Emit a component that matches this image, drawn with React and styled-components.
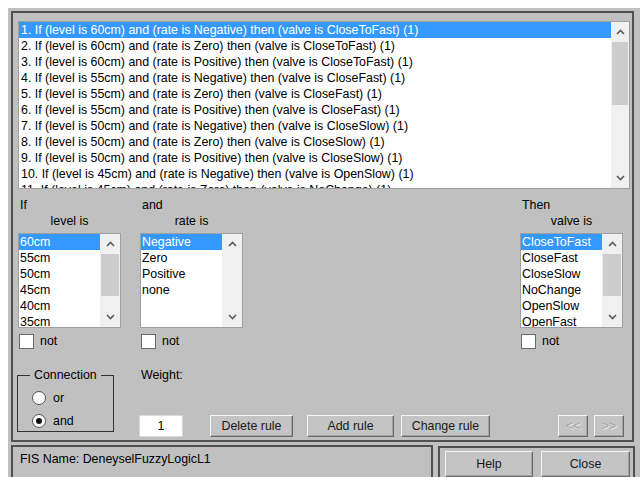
import React from 'react';
import styled, { createGlobalStyle } from 'styled-components';

const GlobalStyle = createGlobalStyle`
  body {
    margin: 0;
    background: #fff;
    font-family: "Liberation Sans", Arial, sans-serif;
    font-size: 12.4px;
    color: #000;
  }
`;

const Window = styled.div`
  margin: 8px 0 0 8px;
  width: 632px;
  height: 469px;
  padding: 3px 0 0 3px;
  box-sizing: border-box;
  background: #c0c0c0;
  overflow: hidden;
  display: flex;
  flex-direction: column;
  gap: 3px;
`;

const Frame = styled.div`
  box-sizing: border-box;
  flex-shrink: 0;
  width: 623px;
  height: 431px;
  border: 2px solid #505050;
  padding: 8px 2px 0 5px;
  display: flex;
  flex-direction: column;
`;

const ListFrame = styled.div`
  box-sizing: border-box;
  flex-shrink: 0;
  width: ${(p) => p.$w}px;
  height: ${(p) => p.$h}px;
  border: 1px solid #a0a0a0;
  background: #fff;
  display: flex;
  overflow: hidden;
`;

const Rows = styled.div`
  flex: 1;
  min-width: 0;
  overflow: hidden;
`;

const Row = styled.div`
  height: 16px;
  line-height: 17px;
  padding-left: ${(p) => p.$pad}px;
  white-space: nowrap;
  background: ${(p) => (p.$sel ? '#3399ff' : 'transparent')};
  color: ${(p) => (p.$sel ? '#fff' : '#000')};
`;

const ScrollBar = styled.div`
  width: ${(p) => p.$w}px;
  flex-shrink: 0;
  background: #f0f0f0;
  display: flex;
  flex-direction: column;
`;

const ArrowBox = styled.div`
  height: 20px;
  flex-shrink: 0;
  display: flex;
  align-items: center;
  justify-content: center;
`;

const Track = styled.div`
  flex: 1;
  display: flex;
  flex-direction: column;
`;

const Thumb = styled.div`
  background: #cdcdcd;
  margin: 0 1px;
`;

const Chevron = ({ down }) => (
  <svg width="9" height="6" viewBox="0 0 9 6">
    <polyline
      points={down ? '1,1 4.5,4.5 8,1' : '1,5 4.5,1.5 8,5'}
      fill="none"
      stroke="#5a5a5a"
      strokeWidth="1.6"
    />
  </svg>
);

const ListBox = ({ items, selected = 0, w, h, sbw, thumb, pad = 2 }) => (
  <ListFrame $w={w} $h={h}>
    <Rows>
      {items.map((it, i) => (
        <Row key={i} $sel={i === selected} $pad={pad}>
          {it}
        </Row>
      ))}
    </Rows>
    <ScrollBar $w={sbw}>
      <ArrowBox>
        <Chevron />
      </ArrowBox>
      <Track>{thumb > 0 && <Thumb style={{ height: thumb }} />}</Track>
      <ArrowBox>
        <Chevron down />
      </ArrowBox>
    </ScrollBar>
  </ListFrame>
);

const Selectors = styled.div`
  display: flex;
  margin-top: 8px;
`;

const Column = styled.div`
  width: 103px;
  display: flex;
  flex-direction: column;
  margin-left: ${(p) => p.$ml || '0'};
  margin-right: ${(p) => p.$mr || '0'};
`;

const Caption = styled.div`
  line-height: 16px;
  padding-left: 2px;
`;

const SubCaption = styled.div`
  line-height: 16px;
  text-align: center;
  margin-bottom: 4px;
`;

const CheckRow = styled.label`
  display: flex;
  align-items: center;
  gap: 6px;
  height: 15px;
  margin-top: 6px;
  margin-left: 1px;
  line-height: 15px;
`;

const CheckBox = styled.span`
  box-sizing: border-box;
  flex-shrink: 0;
  width: 15px;
  height: 15px;
  background: #fff;
  border: 1px solid #6a6a6a;
`;

const BottomArea = styled.div`
  display: flex;
  align-items: flex-start;
  margin-top: 19px;
`;

const GroupBox = styled.fieldset`
  box-sizing: border-box;
  width: 97px;
  height: 64px;
  margin: 0 0 0 -1px;
  padding: 8px 0 0 14px;
  border: 1px solid #333;
  min-width: 0;
  display: flex;
  flex-direction: column;
  gap: 7px;
`;

const Legend = styled.legend`
  padding: 0 4px;
  margin-left: -2px;
  line-height: 14px;
`;

const RadioRow = styled.div`
  display: flex;
  align-items: center;
  gap: 7px;
  height: 16px;
`;

const RadioDot = styled.span`
  box-sizing: border-box;
  width: 14px;
  height: 14px;
  border-radius: 50%;
  border: 1px solid #555;
  background: #fff;
  display: flex;
  align-items: center;
  justify-content: center;

  &::after {
    content: '';
    width: 6px;
    height: 6px;
    border-radius: 50%;
    background: ${(p) => (p.$on ? '#111' : 'transparent')};
  }
`;

const WeightPanel = styled.div`
  flex: 1;
  margin-left: 25px;
  margin-right: 6px;
  display: flex;
  flex-direction: column;
`;

const WeightLabel = styled.div`
  line-height: 14px;
  padding-left: 2px;
`;

const Controls = styled.div`
  display: flex;
  margin-top: 33px;
`;

const WeightInput = styled.div`
  box-sizing: border-box;
  width: 44px;
  height: 22px;
  background: #fff;
  border: 1px solid #d8d8d8;
  display: flex;
  align-items: center;
  justify-content: center;
`;

const Button = styled.button`
  box-sizing: border-box;
  width: ${(p) => p.$w}px;
  height: ${(p) => p.$h || 22}px;
  margin: 0 0 0 ${(p) => p.$ml || 0};
  padding: 0;
  font: inherit;
  background: #c4c4c4;
  color: ${(p) => (p.disabled ? '#a4a4a4' : '#1a1a1a')};
  text-shadow: ${(p) => (p.disabled ? '1px 1px 0 #ececec' : 'none')};
  border: 1px solid;
  border-color: #f4f4f4 #6a6a6a #6a6a6a #f4f4f4;
  box-shadow: inset -1px -1px 0 #a2a2a2;
`;

const BottomRow = styled.div`
  display: flex;
  gap: 5px;
  align-items: flex-start;
`;

const NamePanel = styled.div`
  box-sizing: border-box;
  width: 422px;
  height: 40px;
  border: 2px solid #505050;
  padding: 5px 0 0 7px;
  line-height: 14px;
`;

const ActionPanel = styled.div`
  box-sizing: border-box;
  width: 197px;
  height: 40px;
  margin-top: 1px;
  border: 2px solid #505050;
  padding: 3px 0 0 5px;
  display: flex;
  gap: 8px;
`;

const rules = [
  '1. If (level is 60cm) and (rate is Negative) then (valve is CloseToFast) (1)',
  '2. If (level is 60cm) and (rate is Zero) then (valve is CloseToFast) (1)',
  '3. If (level is 60cm) and (rate is Positive) then (valve is CloseToFast) (1)',
  '4. If (level is 55cm) and (rate is Negative) then (valve is CloseFast) (1)',
  '5. If (level is 55cm) and (rate is Zero) then (valve is CloseFast) (1)',
  '6. If (level is 55cm) and (rate is Positive) then (valve is CloseFast) (1)',
  '7. If (level is 50cm) and (rate is Negative) then (valve is CloseSlow) (1)',
  '8. If (level is 50cm) and (rate is Zero) then (valve is CloseSlow) (1)',
  '9. If (level is 50cm) and (rate is Positive) then (valve is CloseSlow) (1)',
  '10. If (level is 45cm) and (rate is Negative) then (valve is OpenSlow) (1)',
  '11. If (level is 45cm) and (rate is Zero) then (valve is NoChange) (1)',
];

const levels = ['60cm', '55cm', '50cm', '45cm', '40cm', '35cm'];
const rates = ['Negative', 'Zero', 'Positive', 'none'];
const valves = ['CloseToFast', 'CloseFast', 'CloseSlow', 'NoChange', 'OpenSlow', 'OpenFast'];

const App = () => (
  <>
    <GlobalStyle />
    <Window>
      <Frame>
        <ListBox items={rules} w={612} h={168} sbw={18} thumb={63} />

        <Selectors>
          <Column>
            <Caption>If</Caption>
            <SubCaption>level is</SubCaption>
            <ListBox items={levels} w={103} h={95} sbw={20} thumb={42} pad={1} />
            <CheckRow>
              <CheckBox />
              not
            </CheckRow>
          </Column>
          <Column $ml="19px">
            <Caption>and</Caption>
            <SubCaption>rate is</SubCaption>
            <ListBox items={rates} w={103} h={95} sbw={20} thumb={0} pad={1} />
            <CheckRow>
              <CheckBox />
              not
            </CheckRow>
          </Column>
          <Column $ml="auto" $mr="7px">
            <Caption>Then</Caption>
            <SubCaption>valve is</SubCaption>
            <ListBox items={valves} w={103} h={95} sbw={20} thumb={42} pad={1} />
            <CheckRow>
              <CheckBox />
              not
            </CheckRow>
          </Column>
        </Selectors>

        <BottomArea>
          <GroupBox>
            <Legend>Connection</Legend>
            <RadioRow>
              <RadioDot />
              or
            </RadioRow>
            <RadioRow>
              <RadioDot $on />
              and
            </RadioRow>
          </GroupBox>
          <WeightPanel>
            <WeightLabel>Weight:</WeightLabel>
            <Controls>
              <WeightInput>1</WeightInput>
              <Button $w={83} $ml="27px">Delete rule</Button>
              <Button $w={87} $ml="14px">Add rule</Button>
              <Button $w={89} $ml="7px">Change rule</Button>
              <Button $w={30} $ml="auto" disabled>&lt;&lt;</Button>
              <Button $w={30} $ml="6px" disabled>&gt;&gt;</Button>
            </Controls>
          </WeightPanel>
        </BottomArea>
      </Frame>

      <BottomRow>
        <NamePanel>FIS Name: DeneyselFuzzyLogicL1</NamePanel>
        <ActionPanel>
          <Button $w={88} $h={26}>Help</Button>
          <Button $w={89} $h={26}>Close</Button>
        </ActionPanel>
      </BottomRow>
    </Window>
  </>
);

export default App;
